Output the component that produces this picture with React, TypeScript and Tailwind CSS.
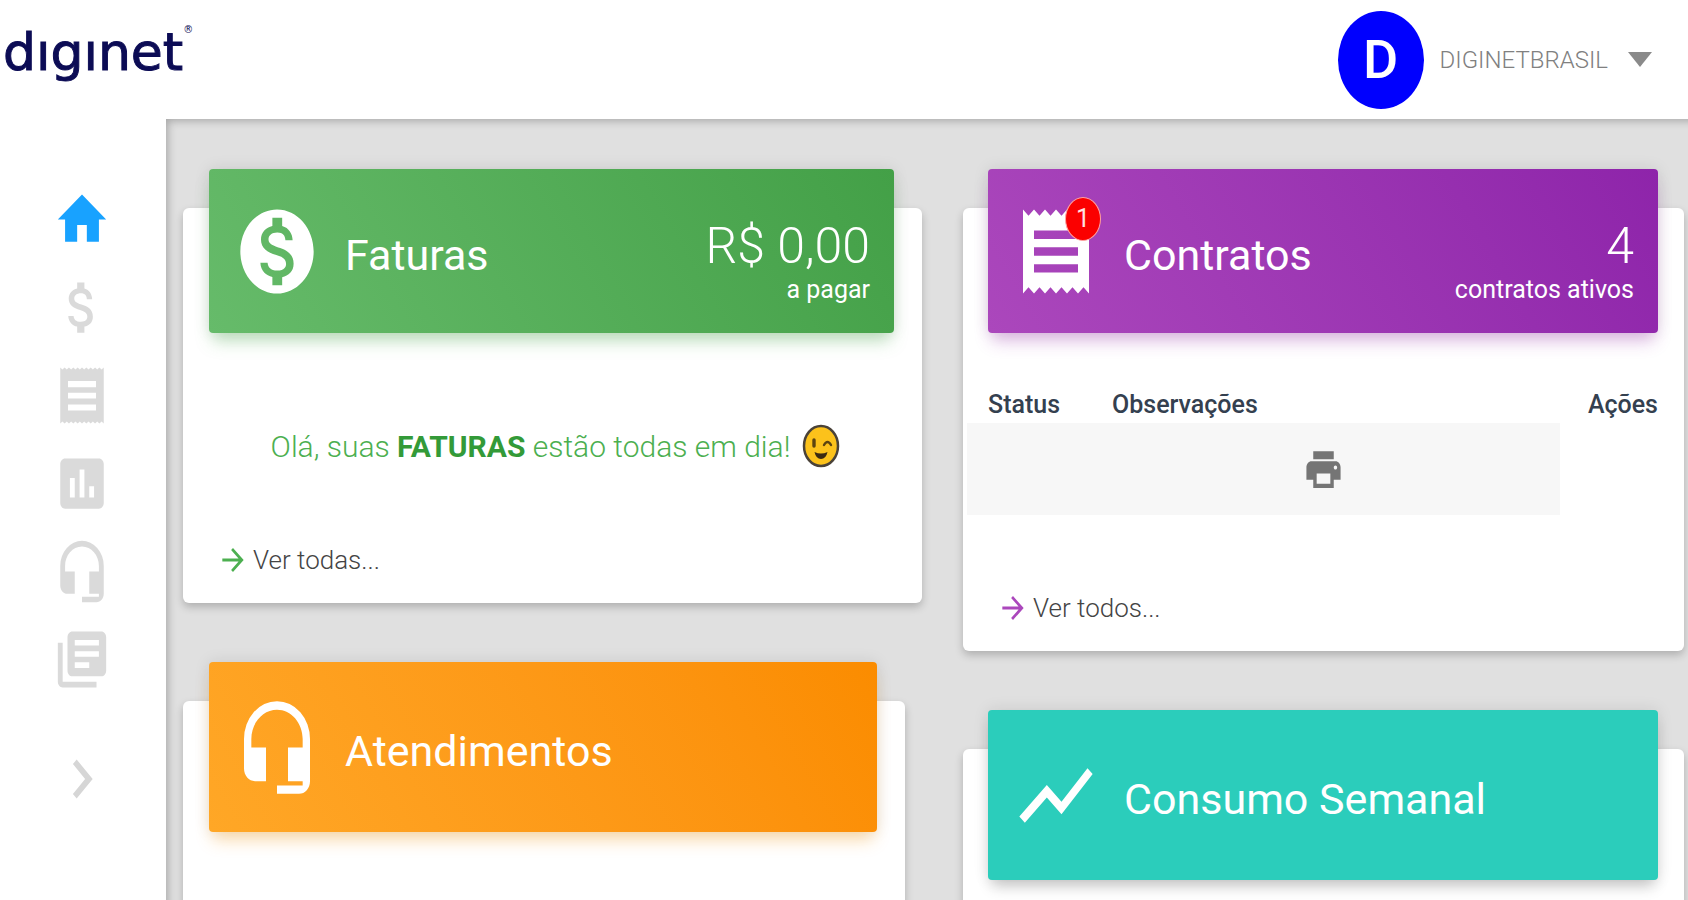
import type { ReactNode, SVGProps } from 'react';
import {
  MdHome, MdAttachMoney, MdReceipt, MdAssessment, MdHeadsetMic, MdLibraryBooks,
  MdChevronRight, MdMonetizationOn, MdShowChart, MdPrint, MdArrowForward,
} from 'react-icons/md';

type Icon = (props: SVGProps<SVGSVGElement>) => ReactNode;

// small receipt with finer teeth for the side menu
function ReceiptSmall(props: SVGProps<SVGSVGElement>) {
  return (
    <svg viewBox="0 0 24 24" fill="currentColor" {...props}>
      <path
        fillRule="evenodd"
        d="M3 2l.9.700.9-.700.9.700.9-.700.9.700.9-.700.9.700.9-.700.9.700.9-.700.9.700.9-.700.9.700.9-.700.9.700.9-.700.9.700.9-.700.9.700.9-.700v20l-.9-.700-.9.700-.9-.700-.9.700-.9-.700-.9.700-.9-.700-.9.700-.9-.700-.9.700-.9-.700-.9.700-.9-.700-.9.700-.9-.700-.9.700-.9-.700-.9.700-.9-.700-.9.700zM6.200 6.800v2.200h11.600V6.800zM6.200 11v2.100h11.600V11zM6.200 15.200v2.200h11.600v-2.200z"
      />
    </svg>
  );
}

const NAV: { label: string; Icon: Icon; active?: boolean }[] = [
  { label: 'Início', Icon: MdHome as Icon, active: true },
  { label: 'Faturas', Icon: MdAttachMoney as Icon },
  { label: 'Contratos', Icon: ReceiptSmall },
  { label: 'Consumo', Icon: MdAssessment as Icon },
  { label: 'Atendimentos', Icon: MdHeadsetMic as Icon },
  { label: 'Documentos', Icon: MdLibraryBooks as Icon },
];

type CardProps = {
  title: string;
  Icon: Icon;
  head: string;
  className?: string;
  badge?: string;
  value?: string;
  caption?: string;
  children?: ReactNode;
};

function Card({ title, Icon, head, className = '', badge, value, caption, children }: CardProps) {
  return (
    <section className={`rounded-md bg-white shadow-[0_4px_8px_rgba(0,0,0,0.22)] ${className}`}>
      <div className={`-mt-[39px] flex items-center rounded-sm px-6 text-white ${head}`}>
        <span className="relative shrink-0">
          <Icon preserveAspectRatio="none" className="h-[101px] w-[88px]" />
          {badge && (
            <span className="absolute right-[-1px] top-[-4px] flex h-11 w-9 items-center justify-center rounded-[50%] border border-red-300 bg-[#fb0000] text-[25px] leading-none text-red-100">
              {badge}
            </span>
          )}
        </span>
        <h2 className="ml-6 mt-2 text-[43px] leading-[52px]">{title}</h2>
        {value && (
          <p className="ml-auto flex flex-col pt-5 text-right">
            <span className="text-[50px] font-light leading-[58px]">{value}</span>
            <span className="text-[25px] leading-[30px]">{caption}</span>
          </p>
        )}
      </div>
      {children}
    </section>
  );
}

function MoreLink({ label, color }: { label: string; color: string }) {
  return (
    <a href="#" className="flex h-9 w-fit items-center text-[26px] font-light text-[#444]">
      <MdArrowForward preserveAspectRatio="none" className={`mr-1 h-9 w-8 ${color}`} />
      {label}
    </a>
  );
}

function Wink() {
  return (
    <svg viewBox="0 0 38 44" className="ml-3 h-11 w-[38px] shrink-0" role="img" aria-label="piscada">
      <ellipse cx="19" cy="22" rx="17" ry="20" fill="#fcc21b" stroke="#4a4238" strokeWidth="2.5" />
      <path d="M12 16v6" stroke="#5c4410" strokeWidth="3.4" strokeLinecap="round" />
      <path d="M22 21q3.500-6 7 0" fill="none" stroke="#5c4410" strokeWidth="2.4" strokeLinecap="round" />
      <path d="M12.500 28q6.500 3 13 0q-1.500 7-6.500 7t-6.500-7z" fill="#3b2a12" />
    </svg>
  );
}

export default function App() {
  return (
    <div className="flex h-screen flex-col overflow-hidden bg-white font-['Roboto',sans-serif]">
      <header className="flex h-[119px] shrink-0 items-center justify-between pr-[30px]">
        <a href="#" aria-label="diginet" className="flex items-start pb-4 pl-[3px] font-['DejaVu_Sans',sans-serif] text-[#0c0c55]">
          <span className="text-[52px] leading-[60px] [-webkit-text-stroke:1px_#0c0c55]">dıgınet</span>
          <span className="text-[10px] leading-4">®</span>
        </a>
        <button type="button" className="flex items-center">
          <span className="flex h-[98px] w-[86px] items-center justify-center rounded-[50%] bg-[#0000fe] text-[54px] font-medium leading-none text-white">D</span>
          <span className="ml-4 text-[24px] font-light text-[#808080]">DIGINETBRASIL</span>
          <svg viewBox="0 0 24 15" className="ml-5 mr-1.5 h-[15px] w-6" aria-hidden="true">
            <path d="M0 0h24L12 15z" fill="#8a8a8a" />
          </svg>
        </button>
      </header>

      <div className="flex min-h-0 grow">
        <nav className="w-[166px] shrink-0 pt-[67px]">
          <ul className="flex flex-col items-center gap-[21px] pr-0.5">
            {NAV.map(({ label, Icon, active }) => (
              <li key={label}>
                <a href="#" aria-label={label} className={active ? 'block text-[#18a2ff]' : 'block text-[#dadada]'}>
                  <Icon preserveAspectRatio="none" className="h-[67px] w-[58px]" />
                </a>
              </li>
            ))}
            <li className="mt-[26px]">
              <button type="button" aria-label="Expandir menu" className="block text-[#d6d6d6]">
                <MdChevronRight preserveAspectRatio="none" className="h-[78px] w-16" />
              </button>
            </li>
          </ul>
        </nav>

        <main className="grid min-w-0 grow grid-cols-[739fr_721fr] gap-x-[41px] overflow-hidden bg-[#e0e0e0] pl-[17px] pr-1 pt-[89px] shadow-[inset_8px_8px_8px_-6px_rgba(0,0,0,0.25)]">
          <div className="flex flex-col gap-[98px]">
            <Card
              title="Faturas"
              Icon={MdMonetizationOn as Icon}
              value="R$ 0,00"
              caption="a pagar"
              head="ml-[26px] mr-7 h-[164px] bg-linear-60 from-[#66bb6a] to-[#43a047] shadow-[0_12px_16px_-4px_rgba(76,175,80,0.35),0_0_16px_rgba(0,0,0,0.1)]"
            >
              <div className="pb-[25px] pl-[34px] pr-7">
                <p className="mt-[93px] flex h-10 items-center justify-center text-[30px] font-light text-[#4caf50]">
                  <span>Olá, suas <b className="font-bold text-[#339a38]">FATURAS</b> estão todas em dia!</span>
                  <Wink />
                </p>
                <div className="mt-[76px]">
                  <MoreLink label="Ver todas..." color="text-[#4caf50]" />
                </div>
              </div>
            </Card>

            <Card
              title="Atendimentos"
              Icon={MdHeadsetMic as Icon}
              className="mr-[17px] h-[395px]"
              head="ml-[26px] mr-7 h-[170px] bg-linear-60 from-[#ffa726] to-[#fb8c00] shadow-[0_12px_16px_-4px_rgba(255,152,0,0.3),0_0_16px_rgba(0,0,0,0.1)]"
            />
          </div>

          <div className="flex flex-col gap-[98px]">
            <Card
              title="Contratos"
              Icon={MdReceipt as Icon}
              badge="1"
              value="4"
              caption="contratos ativos"
              head="ml-[25px] mr-[26px] h-[164px] bg-linear-60 from-[#ab47bc] to-[#8e24aa] shadow-[0_12px_16px_-4px_rgba(156,39,176,0.3),0_0_16px_rgba(0,0,0,0.1)]"
            >
              <div className="px-1 pb-[25px] pt-[54px]">
                <table className="w-full table-fixed text-[#34404f]">
                  <thead>
                    <tr className="h-9 text-left text-[25px] leading-9">
                      <th className="w-[124px] pl-[21px] font-medium">Status</th>
                      <th className="pl-[21px] font-medium">Observações</th>
                      <th className="w-[120px] pr-[22px] text-right font-medium">Ações</th>
                    </tr>
                  </thead>
                  <tbody>
                    <tr className="h-[92px]">
                      <td colSpan={2} className="bg-[#f7f7f7] pl-[120px]">
                        <button type="button" aria-label="Imprimir" className="mx-auto block text-[#757575]">
                          <MdPrint preserveAspectRatio="none" className="h-[49px] w-[41px]" />
                        </button>
                      </td>
                      <td />
                    </tr>
                  </tbody>
                </table>
                <div className="mt-[75px] pl-[30px]">
                  <MoreLink label="Ver todos..." color="text-[#ab47bc]" />
                </div>
              </div>
            </Card>

            <Card
              title="Consumo Semanal"
              Icon={MdShowChart as Icon}
              className="h-[395px]"
              head="ml-[25px] mr-[26px] h-[170px] bg-[#2bcdbb] shadow-[0_10px_14px_-4px_rgba(0,0,0,0.2),0_0_16px_rgba(0,0,0,0.1)]"
            />
          </div>
        </main>
      </div>
    </div>
  );
}
